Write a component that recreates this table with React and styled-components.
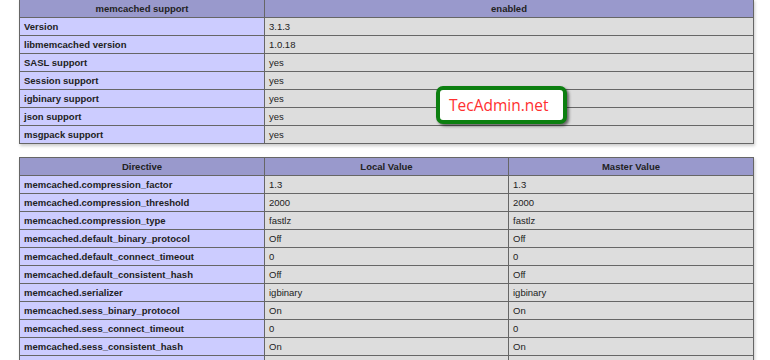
import styled, { createGlobalStyle } from "styled-components";

const GlobalStyle = createGlobalStyle`
  html, body {
    margin: 0;
    padding: 0;
    background: #fff;
  }
  body {
    width: 770px;
    height: 360px;
    overflow: hidden;
    font-family: "Liberation Sans", Arial, sans-serif;
    color: #222;
  }
`;

const Page = styled.div`
  position: relative;
  padding: 0 0 0 19px;
  margin-top: -1px;
`;

const Table = styled.table`
  border-collapse: collapse;
  width: 735px;
  table-layout: fixed;
  box-shadow: 1px 2px 3px #ccc;
  margin-bottom: ${(p) => p.$gap || 0}px;
`;

const Cell = styled.td`
  border: 1px solid #666;
  height: 17px;
  padding: 0 4px;
  box-sizing: border-box;
  font-size: 9.5px;
  line-height: 17px;
  white-space: nowrap;
  overflow: hidden;
  background: ${(p) => (p.$kind === "e" ? "#ccccff" : "#dddddd")};
  font-weight: ${(p) => (p.$kind === "e" ? "bold" : "normal")};
`;

const Head = styled.th`
  border: 1px solid #666;
  height: 17px;
  padding: 0 4px;
  box-sizing: border-box;
  font-size: 9.5px;
  line-height: 17px;
  background: #9999cc;
  font-weight: bold;
  text-align: center;
  width: ${(p) => p.$w || "auto"};
`;

const Badge = styled.div`
  position: absolute;
  left: 436px;
  top: 87px;
  width: 131px;
  height: 38px;
  box-sizing: border-box;
  border: 4px solid #0c7f10;
  border-radius: 7px;
  background: #fff;
  box-shadow: 2px 2px 3px rgba(0, 0, 0, 0.55);
  display: flex;
  align-items: center;
  padding-left: 9px;
  font-family: "Open Sans", "Noto Sans", sans-serif;
  font-size: 15.5px;
  color: #ff3030;
`;

const support = [
  ["Version", "3.1.3"],
  ["libmemcached version", "1.0.18"],
  ["SASL support", "yes"],
  ["Session support", "yes"],
  ["igbinary support", "yes"],
  ["json support", "yes"],
  ["msgpack support", "yes"],
];

const directives = [
  ["memcached.compression_factor", "1.3"],
  ["memcached.compression_threshold", "2000"],
  ["memcached.compression_type", "fastlz"],
  ["memcached.default_binary_protocol", "Off"],
  ["memcached.default_connect_timeout", "0"],
  ["memcached.default_consistent_hash", "Off"],
  ["memcached.serializer", "igbinary"],
  ["memcached.sess_binary_protocol", "On"],
  ["memcached.sess_connect_timeout", "0"],
  ["memcached.sess_consistent_hash", "On"],
  ["", ""],
];

export default function App() {
  return (
    <>
      <GlobalStyle />
      <Page>
        <Table $gap={13}>
          <thead>
            <tr>
              <Head $w="245px">memcached support</Head>
              <Head>enabled</Head>
            </tr>
          </thead>
          <tbody>
            {support.map(([k, v]) => (
              <tr key={k}>
                <Cell $kind="e">{k}</Cell>
                <Cell>{v}</Cell>
              </tr>
            ))}
          </tbody>
        </Table>
        <Table>
          <thead>
            <tr>
              <Head $w="245px">Directive</Head>
              <Head $w="244px">Local Value</Head>
              <Head>Master Value</Head>
            </tr>
          </thead>
          <tbody>
            {directives.map(([k, v], i) => (
              <tr key={i}>
                <Cell $kind="e">{k}</Cell>
                <Cell>{v}</Cell>
                <Cell>{v}</Cell>
              </tr>
            ))}
          </tbody>
        </Table>
        <Badge>TecAdmin.net</Badge>
      </Page>
    </>
  );
}
